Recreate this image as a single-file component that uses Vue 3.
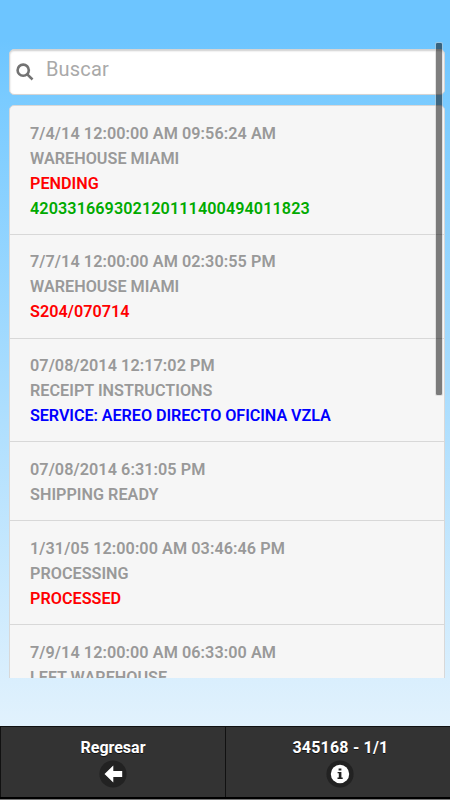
<script setup>
  import { ref, computed } from "vue";

  const search = ref("");

  const entries = [
    {
      date: "7/4/14 12:00:00 AM 09:56:24 AM",
      title: "WAREHOUSE MIAMI",
      status: "PENDING",
      tracking: "420331669302120111400494011823",
    },
    { date: "7/7/14 12:00:00 AM 02:30:55 PM", title: "WAREHOUSE MIAMI", status: "S204/070714" },
    {
      date: "07/08/2014 12:17:02 PM",
      title: "RECEIPT INSTRUCTIONS",
      service: "SERVICE: AEREO DIRECTO OFICINA VZLA",
    },
    { date: "07/08/2014 6:31:05 PM", title: "SHIPPING READY" },
    { date: "1/31/05 12:00:00 AM 03:46:46 PM", title: "PROCESSING", status: "PROCESSED" },
    { date: "7/9/14 12:00:00 AM 06:33:00 AM", title: "LEFT WAREHOUSE" },
  ];

  const filtered = computed(() => {
    const term = search.value.toLowerCase();
    return entries.filter(entry => Object.values(entry).join(" ").toLowerCase().includes(term));
  });
</script>

<template>
  <div class="page">
    <main class="content">
      <label class="search">
        <svg class="search-icon" viewBox="0 0 18 18">
          <circle cx="7.2" cy="7.2" r="5.6" />
          <path d="M11.3 11.3 L16.5 16.5" />
        </svg>
        <input v-model="search" type="text" placeholder="Buscar" />
      </label>
      <ul class="list">
        <li v-for="entry in filtered" :key="entry.date" class="item">
          <p class="date">{{ entry.date }}</p>
          <p>{{ entry.title }}</p>
          <p v-if="entry.status" class="status">{{ entry.status }}</p>
          <p v-if="entry.service" class="service">{{ entry.service }}</p>
          <p v-if="entry.tracking" class="tracking">{{ entry.tracking }}</p>
        </li>
      </ul>
      <div class="scrollbar"></div>
    </main>

    <footer class="navbar">
      <button class="nav-button">
        <span>Regresar</span>
        <svg class="nav-icon back" viewBox="0 0 28 28">
          <circle cx="14" cy="14" r="13.6" fill="#222" />
          <path d="M5.5 14 L14.3 5.5 V11 H23.2 V17 H14.3 V22.5 Z" fill="#fff" />
        </svg>
      </button>
      <button class="nav-button">
        <span class="counter">345168 - 1/1</span>
        <svg class="nav-icon info" viewBox="0 0 28 28">
          <circle cx="14" cy="14" r="13.6" fill="#222" />
          <circle cx="14" cy="14" r="9.2" fill="#fff" />
          <path d="M12.6 8.4 h2.8 v2.2 h-2.8 Z M11.6 12 h3.8 v5.6 h1.3 v1.3 h-5.2 v-1.3 h1.3 v-4.3 h-1.2 Z" fill="#222" />
        </svg>
      </button>
    </footer>
  </div>
</template>

<style>
  body {
    margin: 0;
    overflow: hidden;
  }
</style>

<style scoped>
  .page {
    display: flex;
    flex-direction: column;
    height: 800px;
    box-sizing: border-box;
    padding-top: 42px;
    background: linear-gradient(#6dc5ff 40px, #7acbff 100px, #e2f2fd 730px);
    font-family: Roboto, "Liberation Sans", sans-serif;
  }

  .content {
    position: relative;
    height: 635.5px;
    box-sizing: border-box;
    padding: 7px 5px 0 9px;
    overflow: hidden;
  }

  .search {
    display: flex;
    align-items: center;
    height: 46px;
    box-sizing: border-box;
    padding-left: 6px;
    border: 1px solid #d4d4d4;
    border-radius: 5px;
    background: #fff;
    box-shadow: inset 0 1px 2px rgba(0, 0, 0, 0.2);
  }

  .search-icon {
    flex: none;
    width: 18px;
    height: 18px;
    margin-top: -1px;
    fill: none;
    stroke: #737373;
    stroke-width: 2.6;
  }

  .search input {
    flex: 1;
    min-width: 0;
    margin: 0 0 6px 12px;
    padding: 0;
    border: 0;
    outline: 0;
    background: none;
    font-family: inherit;
    font-size: 20px;
    letter-spacing: 0.15px;
    color: #333;
  }

  .search input::placeholder {
    color: #a9a9a9;
  }

  .list {
    margin: 10px 0 0;
    padding: 0;
    list-style: none;
    border: 1px solid #d8d8d8;
    border-radius: 5px 5px 0 0;
    background: #f6f6f6;
  }

  .item {
    padding: 14.7px 20px 13.1px;
    border-bottom: 1px solid #d8d8d8;
  }

  .item p {
    margin: 0;
    font-size: 16.2px;
    font-weight: 600;
    line-height: 25px;
    letter-spacing: 0.02px;
    white-space: nowrap;
    color: #999;
  }

  .item .date {
    letter-spacing: 0.07px;
  }

  .item .status {
    color: #f00;
  }

  .item .service {
    letter-spacing: -0.07px;
    color: #00f;
  }

  .item .tracking {
    letter-spacing: 0.08px;
    color: #0a0;
  }

  .scrollbar {
    position: absolute;
    top: 0;
    right: 7px;
    width: 6px;
    height: 352px;
    box-sizing: content-box;
    border: 1px solid rgba(200, 200, 200, 0.5);
    border-radius: 2px;
    background: rgba(0, 0, 0, 0.5);
    background-clip: padding-box;
  }

  .navbar {
    display: flex;
    height: 73px;
    margin-top: auto;
    margin-bottom: 1px;
    box-sizing: border-box;
    border-top: 1px solid #111;
    border-bottom: 2px solid #000;
    background: #333;
    box-shadow: 0 1px 0 #777;
  }

  .nav-button {
    display: flex;
    flex: 1;
    flex-direction: column;
    align-items: center;
    padding: 11px 0 0;
    border: 0;
    border-left: 1px solid #111;
    background: none;
    color: #fff;
    font-family: inherit;
    font-size: 16px;
    font-weight: 700;
    line-height: 20px;
    text-shadow: 0 1px 0 #111;
  }

  .counter {
    margin-left: 5px;
    letter-spacing: 0.2px;
  }

  .nav-icon {
    width: 28px;
    height: 28px;
    margin-top: 1.7px;
  }

  .back {
    margin-right: 1px;
  }

  .info {
    margin-left: 4px;
  }
</style>
